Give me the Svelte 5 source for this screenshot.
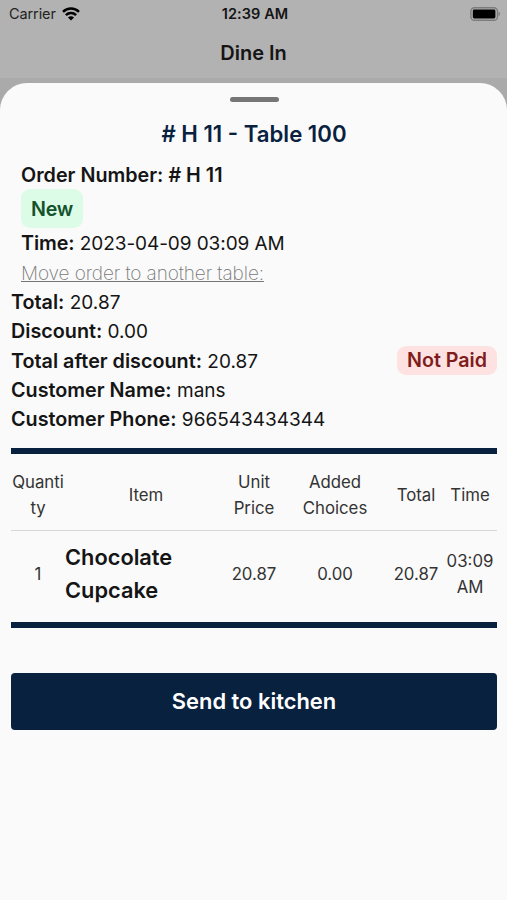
<script>
  const order = {
    number: '# H 11',
    table: 'Table 100',
    status: 'New',
    time: '2023-04-09 03:09 AM',
    payment: 'Not Paid'
  };

  const summary = [
    { label: 'Total:', value: '20.87' },
    { label: 'Discount:', value: '0.00' },
    { label: 'Total after discount:', value: '20.87', badge: order.payment },
    { label: 'Customer Name:', value: 'mans' },
    { label: 'Customer Phone:', value: '966543434344' }
  ];

  const columns = ['Quantity', 'Item', 'Unit Price', 'Added Choices', 'Total', 'Time'];

  const items = [
    { quantity: 1, name: 'Chocolate Cupcake', price: '20.87', choices: '0.00', total: '20.87', time: '03:09 AM' }
  ];
</script>

<div class="screen">
  <div class="status-bar">
    <div class="carrier">
      <span>Carrier</span>
      <svg class="wifi" viewBox="0 0 18 14" width="18" height="14">
        <path d="M1 4.9a11.4 11.4 0 0 1 16 0" />
        <path d="M3.9 8.1a7.2 7.2 0 0 1 10.2 0" />
        <path class="dot" d="M9 13.6L6 10.5a4.2 4.2 0 0 1 6 0z" />
      </svg>
    </div>
    <span class="clock">12:39 AM</span>
    <div class="battery">
      <svg viewBox="0 0 31 14" width="31" height="14">
        <rect x="0.9" y="0.7" width="26.6" height="12.6" rx="3.6" fill="none" stroke="#7c7c7c" stroke-width="1.4" />
        <rect x="2.8" y="2.5" width="22.6" height="9" rx="1.4" fill="#000" />
        <path d="M28.6 4.8a2.4 2.4 0 0 1 0 4.4z" fill="#7c7c7c" />
      </svg>
    </div>
  </div>
  <div class="nav-bar">Dine In</div>

  <div class="sheet-wrap">
    <div class="sheet">
      <div class="handle"></div>
      <h1 class="title">{order.number} - {order.table}</h1>

      <div class="order-info">
        <div class="row"><b>Order Number: {order.number}</b></div>
        <span class="badge new">{order.status}</span>
        <div class="row time"><span><b>Time:</b> {order.time}</span></div>
        <div class="row"><span class="move">Move order to another table:</span></div>
      </div>

      <div class="summary">
        {#each summary as line}
          <div class="row">
            <span><b>{line.label}</b> {line.value}</span>
            {#if line.badge}
              <span class="badge unpaid">{line.badge}</span>
            {/if}
          </div>
        {/each}
      </div>

      <div class="items">
        <div class="item-row head">
          {#each columns as column}
            <div class="cell">{column}</div>
          {/each}
        </div>
        {#each items as item}
          <div class="item-row">
            <div class="cell">{item.quantity}</div>
            <div class="cell name">{item.name}</div>
            <div class="cell">{item.price}</div>
            <div class="cell">{item.choices}</div>
            <div class="cell">{item.total}</div>
            <div class="cell">{item.time}</div>
          </div>
        {/each}
      </div>

      <button class="send">Send to kitchen</button>
    </div>
  </div>
</div>

<style>
  :global(body) {
    margin: 0;
    background: #b1b1b1;
  }
  .screen {
    display: flex;
    flex-direction: column;
    width: 100%;
    height: 900px;
    overflow: hidden;
    background: #b2b2b2;
    color: #151515;
    font-family: Inter, 'Liberation Sans', sans-serif;
  }
  .status-bar {
    display: grid;
    grid-template-columns: 1fr auto 1fr;
    align-items: center;
    height: 27px;
    padding: 0 6px 0 9px;
    box-sizing: border-box;
    font-size: 14.5px;
  }
  .carrier {
    display: flex;
    align-items: center;
    gap: 6px;
    color: #222;
    letter-spacing: -0.1px;
  }
  .wifi {
    fill: none;
    stroke: #000;
    stroke-width: 2.5;
  }
  .wifi .dot {
    fill: #000;
    stroke: none;
  }
  .clock {
    font-weight: 600;
    letter-spacing: 0.1px;
  }
  .battery {
    display: flex;
    justify-content: flex-end;
  }
  .nav-bar {
    height: 50px;
    padding-top: 1px;
    line-height: 50px;
    text-align: center;
    font-size: 20px;
    font-weight: 600;
  }
  .sheet-wrap {
    flex: 1;
    display: flex;
    padding-top: 5px;
    background: #aaa;
  }
  .sheet {
    flex: 1;
    padding: 14px 10px 0 11px;
    border-radius: 27px 27px 0 0;
    background: #fafafa;
  }
  .handle {
    width: 49px;
    height: 5px;
    margin: 0 auto;
    border-radius: 3px;
    background: #767676;
  }
  .title {
    margin: 16px 0 0;
    color: #08213f;
    font-size: 22.2px;
    font-weight: 600;
    line-height: 32px;
    text-align: center;
  }
  .order-info {
    display: flex;
    flex-direction: column;
    align-items: flex-start;
    margin-top: 10px;
    padding-left: 10px;
  }
  .row {
    display: flex;
    align-items: center;
    justify-content: space-between;
    height: 29.35px;
    font-size: 19px;
    line-height: 29px;
    white-space: pre;
  }
  .row > :first-child {
    padding-top: 1.5px;
  }
  b {
    font-size: 19.75px;
    font-weight: 600;
  }
  .badge {
    padding: 0 10px;
    border-radius: 9px;
    font-size: 19.65px;
    font-weight: 600;
    line-height: 29px;
  }
  .new {
    padding: 6px 10px 4px;
    letter-spacing: -0.2px;
    background: #dcfce7;
    color: #14532d;
  }
  .time {
    letter-spacing: -0.08px;
  }
  .unpaid {
    background: #fee2e2;
    color: #7f1d1d;
  }
  .move {
    color: #777;
    font-weight: 200;
    letter-spacing: -0.1px;
    text-decoration: underline;
    text-decoration-thickness: 1px;
  }
  .items {
    margin-top: 14px;
    border-top: 6px solid #08213f;
    border-bottom: 6px solid #08213f;
  }
  .item-row {
    display: grid;
    grid-template-columns: 1fr 3fr 1fr 2fr 1fr 1fr;
    align-items: center;
    height: 87px;
    padding-bottom: 4px;
  }
  .head {
    height: 69px;
    padding: 7px 0 0;
    border-bottom: 1px solid #d8d8d8;
  }
  .cell {
    min-width: 0;
    color: #333;
    font-size: 16.8px;
    line-height: 26px;
    text-align: center;
    overflow-wrap: anywhere;
  }
  .head .cell:nth-child(4) {
    padding: 0 20px;
  }
  .name {
    padding: 0 30px 0 0;
    color: #151515;
    font-size: 21.8px;
    font-weight: 600;
    line-height: 33px;
    text-align: left;
  }
  .send {
    display: block;
    width: 100%;
    height: 57px;
    margin-top: 45px;
    padding: 0;
    border: 0;
    border-radius: 4px;
    background: #08213f;
    color: #fff;
    font-family: inherit;
    font-size: 21.9px;
    font-weight: 600;
  }
</style>
